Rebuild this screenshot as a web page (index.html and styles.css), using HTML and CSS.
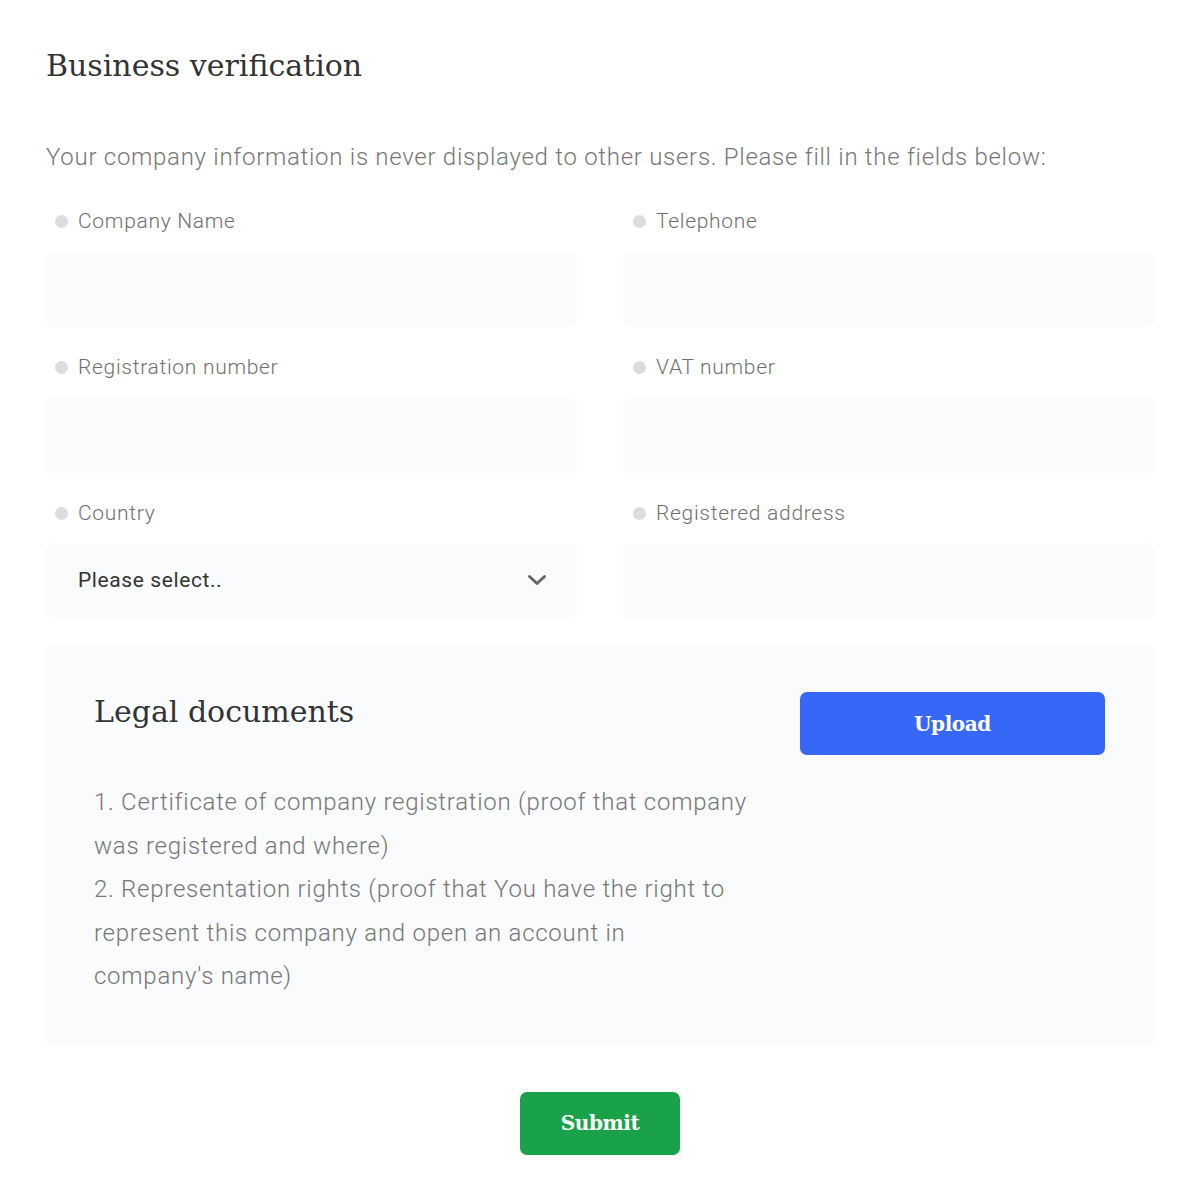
FILE: index.html
```html
<!DOCTYPE html>
<html lang="en">
<head>
<meta charset="utf-8">
<title>Business verification</title>
<link rel="stylesheet" href="styles.css">
</head>
<body>
<main class="page">
  <h1 class="title">Business verification</h1>
  <p class="intro">Your company information is never displayed to other users. Please fill in the fields below:</p>

  <div class="fields">
    <div class="field">
      <label class="label"><span class="dot"></span>Company Name</label>
      <input class="input" type="text">
    </div>
    <div class="field">
      <label class="label"><span class="dot"></span>Telephone</label>
      <input class="input" type="text">
    </div>
    <div class="field">
      <label class="label"><span class="dot"></span>Registration number</label>
      <input class="input" type="text">
    </div>
    <div class="field">
      <label class="label"><span class="dot"></span>VAT number</label>
      <input class="input" type="text">
    </div>
    <div class="field">
      <label class="label"><span class="dot"></span>Country</label>
      <div class="select">
        <span class="select-text">Please select..</span>
        <svg class="chevron" width="20" height="12" viewBox="0 0 20 12"><path d="M2.5 2.5 L10 9.5 L17.5 2.5" fill="none" stroke="#666" stroke-width="3" stroke-linecap="round" stroke-linejoin="round"/></svg>
      </div>
    </div>
    <div class="field">
      <label class="label"><span class="dot"></span>Registered address</label>
      <input class="input" type="text">
    </div>
  </div>

  <section class="legal">
    <div class="legal-head">
      <h2 class="legal-title">Legal documents</h2>
      <button class="btn btn-upload" type="button">Upload</button>
    </div>
    <p class="legal-text">1. Certificate of company registration (proof that company was registered and where)<br>2. Representation rights (proof that You have the right to represent this company and open an account in company's name)</p>
  </section>

  <div class="submit-row">
    <button class="btn btn-submit" type="submit">Submit</button>
  </div>
</main>
</body>
</html>
```

FILE: styles.css
```css
* { box-sizing: border-box; }

html, body {
  margin: 0;
  padding: 0;
  background: #ffffff;
}

body {
  font-family: Roboto, "Liberation Sans", sans-serif;
  color: #777;
}

.page {
  padding: 46px 46px 47px;
}

.title {
  margin: 0;
  font-family: "DejaVu Serif", serif;
  font-weight: normal;
  font-size: 30px;
  line-height: 40px;
  letter-spacing: 0;
  color: #333;
}

.intro {
  margin: 55px 0 0;
  font-weight: 300;
  font-size: 24px;
  line-height: 32px;
  letter-spacing: 0.72px;
  color: #777;
}

.fields {
  margin-top: 33px;
  display: grid;
  grid-template-columns: 1fr 1fr;
  column-gap: 48px;
  row-gap: 27px;
}

.field {
  display: flex;
  flex-direction: column;
  gap: 16px;
}

.label {
  display: flex;
  align-items: center;
  gap: 10px;
  padding-left: 9px;
  font-weight: 300;
  font-size: 21px;
  line-height: 30px;
  letter-spacing: 0.7px;
  color: #6f6f6f;
}

.dot {
  width: 13px;
  height: 13px;
  border-radius: 50%;
  background: #dcdcdc;
  flex: none;
}

.input, .select {
  height: 73px;
  width: 100%;
  border: none;
  border-radius: 8px;
  background: #f9fbfd;
  box-shadow: 0 1px 4px rgba(210, 220, 230, 0.18);
  outline: none;
}

.select {
  display: flex;
  align-items: center;
  justify-content: space-between;
  padding: 0 29px 0 32px;
  height: 72px;
}

.select-text {
  font-size: 21px;
  font-weight: 400;
  letter-spacing: 0.6px;
  color: #333;
}

.chevron { display: block; }

.legal {
  margin-top: 28px;
  background: #f9fbfd;
  border-radius: 8px;
  box-shadow: 0 1px 4px rgba(210, 220, 230, 0.15);
  padding: 47px 48px 45px;
}

.legal-head {
  display: flex;
  justify-content: space-between;
  align-items: flex-start;
}

.legal-title {
  margin: 0;
  font-family: "DejaVu Serif", serif;
  font-weight: normal;
  font-size: 30px;
  line-height: 40px;
  letter-spacing: 0;
  color: #333;
}

.btn {
  border: none;
  border-radius: 7px;
  color: #fff;
  font-family: "DejaVu Serif", serif;
  font-weight: bold;
  font-size: 20px;
  letter-spacing: -0.4px;
  height: 63px;
  cursor: pointer;
}

.btn-upload {
  width: 305px;
  margin-right: 1px;
  background: #3767f6;
}

.legal-text {
  margin: 26px 0 0;
  max-width: 656px;
  font-weight: 300;
  font-size: 24px;
  line-height: 43.5px;
  letter-spacing: 0.74px;
  color: #777;
}

.submit-row {
  margin-top: 48px;
  display: flex;
  justify-content: center;
}

.btn-submit {
  width: 160px;
  background: #1aa24a;
}
```
